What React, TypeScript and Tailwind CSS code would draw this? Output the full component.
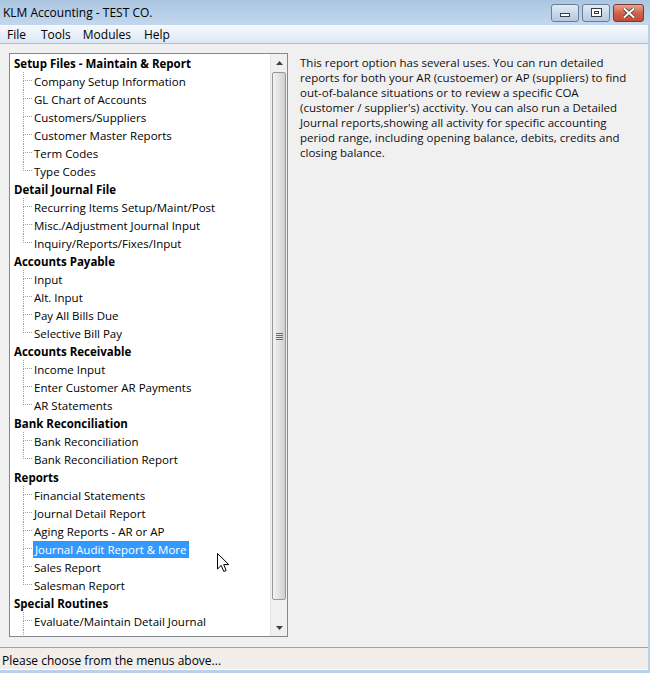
import React from "react";

type Group = { title: string; items: string[] };

const groups: Group[] = [
    {
        title: "Setup Files - Maintain & Report",
        items: [
            "Company Setup Information",
            "GL Chart of Accounts",
            "Customers/Suppliers",
            "Customer Master Reports",
            "Term Codes",
            "Type Codes",
        ],
    },
    {
        title: "Detail Journal File",
        items: [
            "Recurring Items Setup/Maint/Post",
            "Misc./Adjustment Journal Input",
            "Inquiry/Reports/Fixes/Input",
        ],
    },
    {
        title: "Accounts Payable",
        items: ["Input", "Alt. Input", "Pay All Bills Due", "Selective Bill Pay"],
    },
    {
        title: "Accounts Receivable",
        items: ["Income Input", "Enter Customer AR Payments", "AR Statements"],
    },
    {
        title: "Bank Reconciliation",
        items: ["Bank Reconciliation", "Bank Reconciliation Report"],
    },
    {
        title: "Reports",
        items: [
            "Financial Statements",
            "Journal Detail Report",
            "Aging Reports - AR or AP",
            "Journal Audit Report & More",
            "Sales Report",
            "Salesman Report",
        ],
    },
    {
        title: "Special Routines",
        items: [
            "Evaluate/Maintain Detail Journal",
            "Accounts Inquiry Last Bank Check",
            "Year End Closing",
        ],
    },
];

const selected = "Journal Audit Report & More";

const description = [
    "This report option has several uses. You can run detailed",
    "reports for both your AR (custoemer) or AP (suppliers) to find",
    "out-of-balance situations or to review a specific COA",
    "(customer / supplier's) acctivity. You can also run a Detailed",
    "Journal reports,showing all activity for specific accounting",
    "period range, including opening balance, debits, credits and",
    "closing balance.",
];

function TreeItem({ label, last }: { label: string; last: boolean }) {
    const isSel = label === selected;
    return (
        <div className="flex h-[18px] items-center">
            <div className="ml-[13px] flex h-[18px] w-[9px] flex-col">
                <div className="h-[9px] border-b border-l border-dotted border-[#a0a0a0]" />
                <div
                    className={
                        last
                            ? "h-[9px]"
                            : "h-[9px] border-l border-dotted border-[#a0a0a0]"
                    }
                />
            </div>
            <span
                className={
                    isSel
                        ? "ml-[1px] h-[17px] border border-dotted border-[#b8751f] bg-[#3399ff] pl-[1px] pr-[1px] leading-[15px] text-white"
                        : "ml-[2px] pt-[1px] leading-[18px] text-black"
                }
            >
                {label}
            </span>
        </div>
    );
}

function WinButton({ kind }: { kind: "min" | "max" | "close" }) {
    if (kind === "close") {
        return (
            <div className="flex h-[18px] w-[31px] items-center justify-center rounded-[3px] border border-[#7a3a30] bg-gradient-to-b from-[#e8a493] via-[#d1624b] to-[#c24a35]">
                <svg width="12" height="10" viewBox="0 0 12 10">
                    <path
                        d="M1.5 1 L10.5 9 M10.5 1 L1.5 9"
                        stroke="#3a3a3a"
                        strokeWidth="3.4"
                        strokeLinecap="square"
                    />
                    <path
                        d="M1.5 1 L10.5 9 M10.5 1 L1.5 9"
                        stroke="#ffffff"
                        strokeWidth="2"
                        strokeLinecap="square"
                    />
                </svg>
            </div>
        );
    }
    return (
        <div className="flex h-[18px] w-[28px] items-center justify-center rounded-[3px] border border-[#6b7d96] bg-gradient-to-b from-[#e3ecf6] via-[#c9d8ea] to-[#b4c8df]">
            {kind === "min" ? (
                <div className="mt-[5px] h-[4px] w-[10px] border border-[#3c3c3c] bg-white" />
            ) : (
                <div className="flex h-[9px] w-[11px] items-center justify-center border border-[#3c3c3c] bg-white">
                    <div className="h-[3px] w-[5px] border border-[#3c3c3c]" />
                </div>
            )}
        </div>
    );
}

function Scrollbar() {
    return (
        <div className="flex h-full w-[17px] flex-col border-l border-[#e6e6e6] bg-[#f0f0f0]">
            <div className="flex h-[17px] items-center justify-center">
                <svg width="7" height="4" viewBox="0 0 7 4">
                    <path d="M3.5 0 L7 4 L0 4 Z" fill="#404040" />
                </svg>
            </div>
            <div className="flex flex-1 flex-col px-[1px] pt-[1px]">
                <div className="flex h-[528px] items-center justify-center rounded-[2px] border border-[#979797] bg-gradient-to-r from-[#f2f2f2] via-[#e2e2e2] to-[#cfcfcf]">
                    <div className="flex flex-col gap-[1px]">
                        <div className="h-[1px] w-[7px] bg-[#6a6a6a]" />
                        <div className="h-[1px] w-[7px] bg-[#6a6a6a]" />
                        <div className="h-[1px] w-[7px] bg-[#6a6a6a]" />
                        <div className="h-[1px] w-[7px] bg-[#6a6a6a]" />
                    </div>
                </div>
            </div>
            <div className="flex h-[17px] items-center justify-center">
                <svg width="7" height="4" viewBox="0 0 7 4">
                    <path d="M0 0 L7 0 L3.5 4 Z" fill="#404040" />
                </svg>
            </div>
        </div>
    );
}

export default function App() {
    return (
        <div
            className="relative flex h-[673px] w-[650px] flex-col overflow-hidden bg-[#b9d1ea] text-[11.5px]"
            style={{ fontFamily: '"Open Sans", "Noto Sans", sans-serif' }}
        >
            {/* title bar */}
            <div className="flex h-[25px] items-center justify-between bg-gradient-to-b from-[#abc5e1] to-[#c3d8ee] pl-[3px] pr-[6px]">
                <span className="text-[12px] text-black">KLM Accounting - TEST CO.</span>
                <div className="flex items-center gap-[3px]">
                    <WinButton kind="min" />
                    <WinButton kind="max" />
                    <WinButton kind="close" />
                </div>
            </div>

            <div className="mr-[2px] flex flex-1 flex-col bg-[#f0f0f0]">
                {/* menu bar */}
                <div className="flex h-[19px] items-center border-b border-[#b6bcc6] bg-gradient-to-b from-[#f6f9fd] to-[#dce7f4] pt-[2px] text-[12px] text-black">
                    <span className="ml-[7px]">File</span>
                    <span className="ml-[15px]">Tools</span>
                    <span className="ml-[12px]">Modules</span>
                    <span className="ml-[13px]">Help</span>
                </div>

                {/* body */}
                <div className="flex flex-1">
                    <div className="ml-[9px] mt-[9px] flex h-[584px] w-[279px] border border-[#828790] bg-white">
                        <div className="h-full flex-1 overflow-hidden">
                            {groups.map((g) => (
                                <div key={g.title}>
                                    <div className="h-[18px] pl-[4px] pt-[1px] font-bold leading-[18px] text-black">
                                        {g.title}
                                    </div>
                                    {g.items.map((it, i) => (
                                        <TreeItem key={it} label={it} last={i === g.items.length - 1} />
                                    ))}
                                </div>
                            ))}
                        </div>
                        <Scrollbar />
                    </div>

                    <div className="ml-[12px] mt-[11px] leading-[15px] text-[#111]">
                        {description.map((l) => (
                            <div key={l} className="whitespace-nowrap">
                                {l}
                            </div>
                        ))}
                    </div>
                </div>

                {/* status bar */}
                <div className="mt-auto h-[22px] border-t border-[#a0a0a0] bg-[#f0edea] pl-[2px] pt-[4px] text-[12px] leading-[17px] text-black">
                    Please choose from the menus above...
                </div>
                <div className="h-[1px] bg-white" />
            </div>
            <div className="h-[3px]" />

            {/* mouse pointer */}
            <svg
                className="absolute left-[217px] top-[553px]"
                width="13"
                height="20"
                viewBox="0 0 13 20"
            >
                <path
                    d="M0.5 0.5 L0.5 16 L4.2 12.4 L6.8 18.5 L9.2 17.5 L6.7 11.6 L11.8 11.6 Z"
                    fill="#ffffff"
                    stroke="#000000"
                    strokeWidth="1"
                    strokeLinejoin="miter"
                />
            </svg>
        </div>
    );
}
